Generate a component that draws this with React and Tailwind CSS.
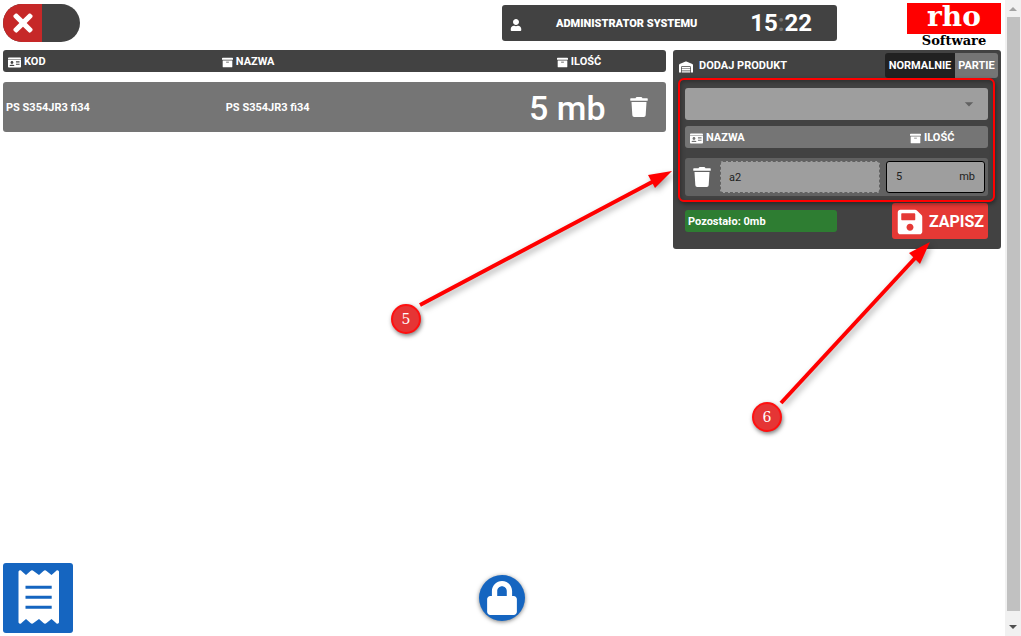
import { useState } from "react";
import { FaArchive, FaIdCard, FaLock, FaSave, FaTimes, FaTrash, FaUser, FaWarehouse } from "react-icons/fa";
import { MdArrowDropDown } from "react-icons/md";

export default function App() {
  return (
    <div className="relative flex min-h-screen bg-white font-['Roboto',sans-serif] text-[11px] leading-4 font-bold text-white">
      <div className="flex min-w-0 flex-1 flex-col pt-[3px] pr-1 pb-[3px] pl-[3px]">
        <TopBar />
        <main className="mt-1 flex flex-1 items-start gap-[7px]">
          <ProductTable />
          <AddProduct />
        </main>
        <BottomBar />
      </div>
      <ScrollTrack />
      <Annotations />
    </div>
  );
}

function TopBar() {
  return (
    <header className="flex h-[43px] items-start">
      <button
        type="button"
        aria-label="Zamknij"
        className="mt-px flex h-[38px] w-[77px] overflow-hidden rounded-full bg-[#424242]"
      >
        <span className="flex h-full w-[39px] items-center justify-center bg-[#c62828]">
          <FaTimes className="size-7" />
        </span>
      </button>
      <div className="mt-[2px] mr-[70px] ml-auto flex h-9 w-[335px] items-center rounded-[3px] bg-[#424242] pr-[25px] pl-2">
        <FaUser className="mt-1 size-3" />
        <span className="ml-[34px] flex-1 pt-px font-black">ADMINISTRATOR SYSTEMU</span>
        <time className="text-2xl">
          15<span className="text-[#757575]">:</span>22
        </time>
      </div>
      <div className="w-[94px] text-center font-['DejaVu_Serif',serif]">
        <div className="h-[31px] bg-[#ff0000] text-[28px] leading-7">rho</div>
        <div className="text-[13px] leading-[13px] text-black">Software</div>
      </div>
    </header>
  );
}

function ProductTable() {
  return (
    <table className="flex-1 table-fixed border-separate border-spacing-0 text-left">
      <colgroup>
        <col className="w-[33%]" />
        <col className="w-[43%]" />
        <col className="w-[17%]" />
        <col />
      </colgroup>
      <thead className="bg-[#424242]">
        <tr className="h-[22px]">
          <th className="rounded-l-[3px] p-0 pl-[5px]">
            <Heading icon={<FaIdCard className="size-[13px]" />} text="KOD" />
          </th>
          <th className="p-0">
            <Heading icon={<FaArchive className="size-[11px]" />} text="NAZWA" />
          </th>
          <th className="p-0 pl-[50px]">
            <Heading icon={<FaArchive className="size-[11px]" />} text="ILOŚĆ" />
          </th>
          <th className="rounded-r-[3px] p-0" />
        </tr>
      </thead>
      <tbody className="before:block before:h-[10px] before:content-['']">
        <tr className="h-[50px] bg-[#757575]">
          <td className="rounded-l-[3px] p-0 pt-[2px] pl-[3px]">PS S354JR3 fi34</td>
          <td className="p-0 pt-[2px] pl-1">PS S354JR3 fi34</td>
          <td className="p-0 pt-[2px] pr-[14px] text-right text-[34px] font-medium whitespace-nowrap">5 mb</td>
          <td className="rounded-r-[3px] p-0 pr-2">
            <DeleteButton />
          </td>
        </tr>
      </tbody>
    </table>
  );
}

function Heading({ icon, text }) {
  return (
    <span className="flex items-center gap-[3px] pt-[2px]">
      {icon}
      {text}
    </span>
  );
}

function DeleteButton() {
  return (
    <button type="button" aria-label="Usuń" className="mx-auto block">
      <FaTrash className="size-5" />
    </button>
  );
}

function AddProduct() {
  const [name, setName] = useState("a2");
  const [amount, setAmount] = useState("5");

  return (
    <section className="w-[328px] rounded-[3px] bg-[#424242] pt-[3px] pb-[10px]">
      <div className="flex items-center pr-[3px] pl-[6px]">
        <FaWarehouse className="mt-[2px] size-[14px]" />
        <h2 className="ml-[6px] flex-1">DODAJ PRODUKT</h2>
        <button type="button" className="h-[25px] w-[70px] rounded-l-[3px] bg-[#212121]">
          NORMALNIE
        </button>
        <button type="button" className="h-[25px] w-[43px] rounded-r-[3px] bg-[#757575]">
          PARTIE
        </button>
      </div>

      <div className="relative mt-[10px] mr-[13px] ml-3">
        <div className="relative">
          <select
            aria-label="Produkt"
            className="block h-8 w-full appearance-none rounded-[3px] bg-[#9e9e9e] px-2 text-black"
          />
          <MdArrowDropDown className="pointer-events-none absolute top-[6px] right-[9px] size-5 text-[#616161]" />
        </div>
        <table className="mt-[6px] w-full table-fixed border-separate border-spacing-0 text-left">
          <colgroup>
            <col className="w-[35px]" />
            <col />
            <col className="w-[108px]" />
          </colgroup>
          <thead className="bg-[#757575]">
            <tr className="h-[22px]">
              <th colSpan={2} className="rounded-l-[3px] p-0 pl-[5px]">
                <Heading icon={<FaIdCard className="size-[13px]" />} text="NAZWA" />
              </th>
              <th className="rounded-r-[3px] p-0 pl-[30px]">
                <Heading icon={<FaArchive className="size-[11px]" />} text="ILOŚĆ" />
              </th>
            </tr>
          </thead>
          <tbody className="before:block before:h-[10px] before:content-['']">
            <tr className="h-[38px] bg-[#616161]">
              <td className="rounded-l-[3px] p-0 pr-[2px]">
                <DeleteButton />
              </td>
              <td className="p-0">
                <input
                  aria-label="Nazwa"
                  value={name}
                  onChange={(e) => setName(e.target.value)}
                  className="block h-8 w-full rounded-[3px] border border-dashed border-[#616161] bg-[#9e9e9e] px-2 font-normal text-[#212121]"
                />
              </td>
              <td className="rounded-r-[3px] p-0 pr-[3px] pl-[6px]">
                <label className="flex h-8 items-center rounded-[3px] border border-black bg-[#9e9e9e] px-[9px] font-normal text-[#212121]">
                  <input
                    aria-label="Ilość"
                    value={amount}
                    onChange={(e) => setAmount(e.target.value)}
                    className="w-0 flex-1 outline-none"
                  />
                  mb
                </label>
              </td>
            </tr>
          </tbody>
        </table>
        <div className="pointer-events-none absolute -inset-x-[7px] -top-[10px] -bottom-[6px] rounded-[6px] border-2 border-[#ff0000] shadow-[1px_2px_4px_rgba(0,0,0,0.4),inset_1px_2px_4px_rgba(0,0,0,0.3)]" />
      </div>

      <div className="mt-[7px] mr-[13px] ml-3 flex items-center justify-between">
        <div className="flex h-[22px] w-[152px] items-center rounded-[3px] bg-[#2e7d32] px-[3px] pt-[2px]">
          Pozostało: 0mb
        </div>
        <button type="button" className="flex h-9 items-center gap-[5px] rounded-[3px] bg-[#e53935] px-1 pt-[2px] text-base">
          <FaSave className="size-7" />
          ZAPISZ
        </button>
      </div>
    </section>
  );
}

function BottomBar() {
  return (
    <footer className="grid grid-cols-[1fr_auto_1fr] items-center">
      <button type="button" aria-label="Dokument" className="size-[70px] rounded-[3px] bg-[#1565c0]">
        <ReceiptIcon />
      </button>
      <button
        type="button"
        aria-label="Zablokuj"
        className="flex size-[46px] items-center justify-center rounded-full bg-[#1565c0] shadow-[0_1px_4px_rgba(0,0,0,0.5)]"
      >
        <FaLock className="size-[34px]" />
      </button>
    </footer>
  );
}

function ReceiptIcon() {
  return (
    <svg viewBox="0 0 70 70" className="size-full">
      <path
        d="M15.5 8.5Q17 6 19 8.5L23 12L27.5 8Q29 6.500 30.500 8L36 12L40.500 8Q42 6.500 43.500 8L48.500 12L52.500 8.500Q54.500 6 56 8.500V59.500Q54.500 62 52.500 59.500L48.500 56L43.500 60Q42 61.500 40.500 60L36 56L30.500 60Q29 61.500 27.500 60L23 56L19 59.500Q17 62 15.500 59.500Z"
        fill="#fff"
      />
      <path d="M22.500 24.200H48.700M22.500 34.200H48.700M22.500 44.200H48.700" stroke="#1565c0" strokeWidth="3" />
    </svg>
  );
}

function ScrollTrack() {
  return (
    <div aria-hidden="true" className="flex w-4 flex-col items-center bg-[#f1f1f1]">
      <svg viewBox="0 0 16 17" className="h-[17px] w-4 fill-[#a3a3a3]">
        <path d="M4 11h8L8 7z" />
      </svg>
      <div className="w-[13px] flex-1 bg-[#c1c1c1]" />
      <svg viewBox="0 0 16 25" className="h-[25px] w-4 fill-[#505050]">
        <path d="M4 14h8l-4 4z" />
      </svg>
    </div>
  );
}

/* Numbered steps pointing at the form and the save button */
function Annotations() {
  return (
    <div className="pointer-events-none absolute inset-0 overflow-hidden">
      <svg className="size-full fill-[#ff0000] stroke-[#ff0000] drop-shadow-[2px_3px_3px_rgba(0,0,0,0.35)]">
        <path d="M420 305L654 181" strokeWidth="4" />
        <path d="M672 171L648 175L655 188z" stroke="none" />
        <path d="M781 403L917 256" strokeWidth="4" />
        <path d="M930 242L909 253L920 264z" stroke="none" />
      </svg>
      <Step number="5" className="top-[304px] left-[391px]" />
      <Step number="6" className="top-[402px] left-[752px]" />
    </div>
  );
}

function Step({ number, className }) {
  return (
    <span
      className={`absolute flex size-[30px] items-center justify-center rounded-full border-2 border-[#ff1010] bg-[#e53535] font-['DejaVu_Serif',serif] text-sm font-normal shadow-[1px_2px_4px_rgba(0,0,0,0.5)] ${className}`}
    >
      {number}
    </span>
  );
}
